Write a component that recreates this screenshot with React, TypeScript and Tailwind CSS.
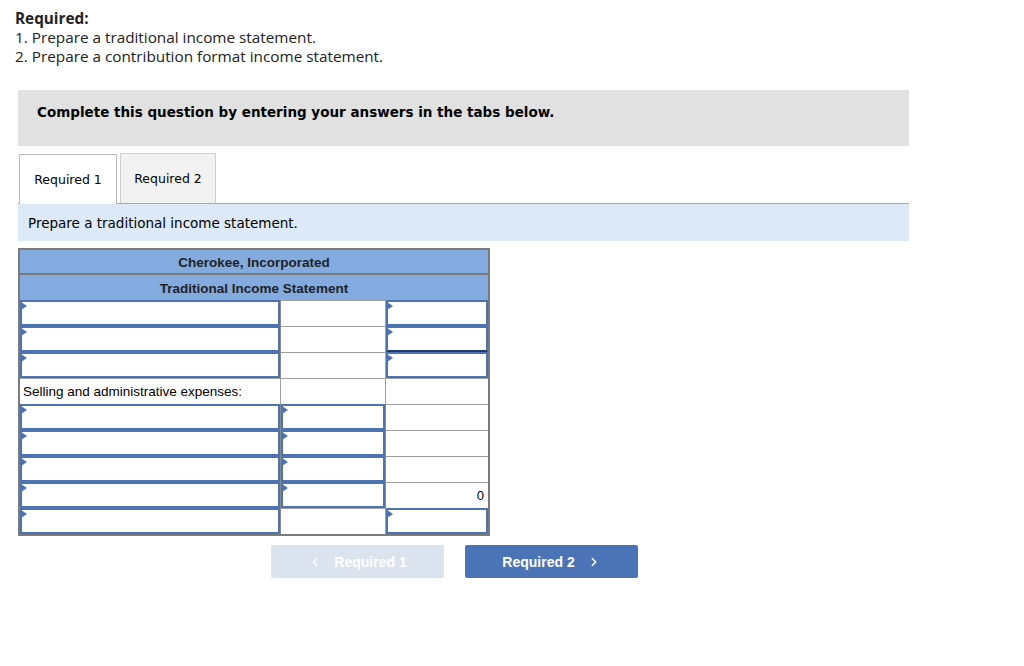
import React from "react";
import { ChevronLeft, ChevronRight } from "lucide-react";

type Cell = { kind: "input" | "plain" | "text"; value?: string; dark?: boolean };

const rows: Cell[][] = [
  [{ kind: "input" }, { kind: "plain" }, { kind: "input" }],
  [{ kind: "input" }, { kind: "plain" }, { kind: "input", dark: true }],
  [{ kind: "input" }, { kind: "plain" }, { kind: "input" }],
  [{ kind: "text", value: "Selling and administrative expenses:" }, { kind: "plain" }, { kind: "plain" }],
  [{ kind: "input" }, { kind: "input" }, { kind: "plain" }],
  [{ kind: "input" }, { kind: "input" }, { kind: "plain" }],
  [{ kind: "input" }, { kind: "input" }, { kind: "plain" }],
  [{ kind: "input" }, { kind: "input" }, { kind: "plain", value: "0" }],
  [{ kind: "input" }, { kind: "plain" }, { kind: "input" }],
];

const InputCell = ({ dark }: { dark?: boolean }) => (
  <div
    className={`relative h-full w-full bg-white border-2 border-[#4d73b0] ${
      dark ? "border-b-[#1f3a66]" : ""
    }`}
  >
    {/* little triangle marker */}
    <span className="absolute -left-[1px] top-0 w-0 h-0 border-t-[4px] border-b-[4px] border-l-[6px] border-t-transparent border-b-transparent border-l-[#4d73b0]" />
  </div>
);

const App: React.FC = () => {
  return (
    <div className="min-h-screen bg-white pt-[9px] font-['Open_Sans',sans-serif] text-[#222]">
      {/* Instructions */}
      <div className="px-[15px] text-[15.3px] leading-[19px]">
        <div className="font-bold">Required:</div>
        <div>1. Prepare a traditional income statement.</div>
        <div>2. Prepare a contribution format income statement.</div>
      </div>

      <div className="ml-[18px] w-[891px] mt-[24px]">
        {/* Gray prompt box */}
        <div className="h-[56px] bg-[#e1e1e1] pt-[14px] px-[19px] leading-[16px] font-['DejaVu_Sans',sans-serif] font-bold text-[13.5px] text-black">
          Complete this question by entering your answers in the tabs below.
        </div>

        {/* Tabs */}
        <div className="mt-[7px] flex items-end h-[50px] font-['DejaVu_Sans',sans-serif] text-[12.5px] text-black">
          <div className="ml-[1px] h-[50px] w-[98px] bg-white border border-b-0 border-[#bdbdbd] flex items-center justify-center relative top-[1px] pt-[2px]">
            Required 1
          </div>
          <div className="ml-[3px] h-[50px] w-[96px] bg-[#f2f2f2] border border-b-0 border-[#cfcfcf] flex items-center justify-center pt-[2px]">
            Required 2
          </div>
        </div>

        {/* Blue prompt band */}
        <div className="h-[38px] bg-[#dde9f7] border-t border-[#a9a9a9] flex items-center px-[10px] pt-[2px] font-['DejaVu_Sans',sans-serif] text-[13.5px] text-black">
          Prepare a traditional income statement.
        </div>

        {/* Statement table */}
        <div className="mt-[7px] w-[472px] border-2 border-[#7b7b7b] font-['Liberation_Sans',sans-serif] text-[13.5px] text-black">
          <div className="h-[25px] bg-[#84abe0] border-b-2 border-[#7b7b7b] flex items-center justify-center pt-[3px] font-bold text-[#222]">
            Cherokee, Incorporated
          </div>
          <div className="h-[25px] bg-[#84abe0] flex items-center justify-center pt-[3px] font-bold text-[#222]">
            Traditional Income Statement
          </div>
          {rows.map((row, i) => (
            <div key={i} className="grid grid-cols-[261px_105px_102px] h-[26px]">
              {row.map((c, j) => (
                <div
                  key={j}
                  className={`h-[26px] ${j < 2 ? "border-r border-[#8a8a8a]" : ""} ${
                    c.kind === "input" ? "" : "border-t border-[#a0a0a0]"
                  }`}
                >
                  {c.kind === "input" ? (
                    <InputCell dark={c.dark} />
                  ) : c.kind === "text" ? (
                    <div className="h-full flex items-center px-[3px] pt-[1px]">{c.value}</div>
                  ) : (
                    <div className="h-full flex items-center justify-end px-[4px] text-[13px]">
                      {c.value}
                    </div>
                  )}
                </div>
              ))}
            </div>
          ))}
        </div>

        {/* Navigation buttons */}
        <div className="mt-[9px] ml-[253px] flex gap-[21px] font-['Liberation_Sans',sans-serif] font-bold text-[14px]">
          <button className="w-[173px] h-[33px] rounded-[2px] bg-[#dae3ee] text-white flex items-center justify-center gap-[12px] pt-[1px]">
            <ChevronLeft size={14} strokeWidth={2.5} />
            <span>Required 1</span>
          </button>
          <button className="w-[173px] h-[33px] rounded-[2px] bg-[#4a74b5] text-white flex items-center justify-center gap-[12px] pt-[1px]">
            <span>Required 2</span>
            <ChevronRight size={14} strokeWidth={2.5} />
          </button>
        </div>
      </div>
    </div>
  );
};

export default App;
